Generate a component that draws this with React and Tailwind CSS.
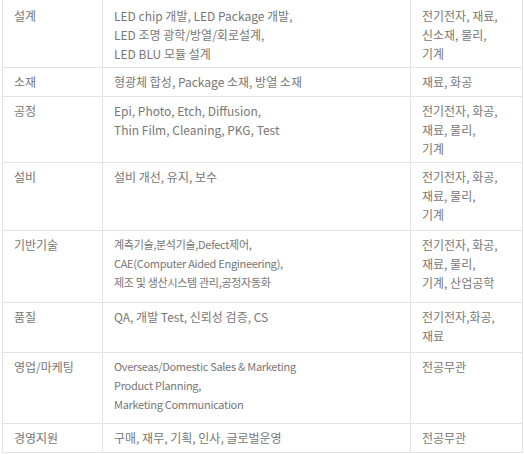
import React from "react";

const rows = [
  {
    h: "h-[68px]",
    pt: "pt-[6px]",
    a: "설계",
    b: ["LED chip 개발, LED Package 개발,", "LED 조명 광학/방열/회로설계,", "LED BLU 모듈 설계"],
    c: ["전기전자, 재료,", "신소재, 물리,", "기계"],
  },
  { h: "h-[29px]", pt: "pt-[4px]", a: "소재", b: ["형광체 합성, Package 소재, 방열 소재"], c: ["재료, 화공"] },
  {
    h: "h-[66px]",
    pt: "pt-[4px]",
    a: "공정",
    b: ["Epi, Photo, Etch, Diffusion,", "Thin Film, Cleaning, PKG, Test"],
    c: ["전기전자, 화공,", "재료, 물리,", "기계"],
  },
  { h: "h-[68px]", pt: "pt-[4px]", a: "설비", b: ["설비 개선, 유지, 보수"], c: ["전기전자, 화공,", "재료, 물리,", "기계"] },
  {
    h: "h-[72px]",
    pt: "pt-[4px]",
    a: "기반기술",
    small: true,
    b: ["계측기술,분석기술,Defect제어,", "CAE(Computer Aided Engineering),", "제조 및 생산시스템 관리,공정자동화"],
    c: ["전기전자, 화공,", "재료, 물리,", "기계, 산업공학"],
  },
  { h: "h-[50px]", pt: "pt-[4px]", a: "품질", b: ["QA, 개발 Test, 신뢰성 검증, CS"], c: ["전기전자,화공,", "재료"] },
  {
    h: "h-[71px]",
    pt: "pt-[4px]",
    a: "영업/마케팅",
    small: true,
    b: ["Overseas/Domestic Sales & Marketing", "Product Planning,", "Marketing Communication"],
    c: ["전공무관"],
  },
  { h: "h-[29px]", pt: "pt-[4px]", a: "경영지원", b: ["구매, 재무, 기획, 인사, 글로벌운영"], c: ["전공무관"] },
];

const font = "font-['Noto_Sans_CJK_KR','Noto_Sans',sans-serif]";

export default function App() {
  return (
    <div className="w-[524px] h-[454px] bg-white overflow-hidden">
      <div className={`ml-[2px] w-[521px] border-l border-r border-[#e3e3e3] text-[#777777] text-[12px] leading-[19px] ${font}`}>
        {rows.map((r, i) => (
          <div key={i} className={`flex border-b border-[#e3e3e3] ${r.h}`}>
            <div className={`w-[100px] shrink-0 border-r border-[#e3e3e3] pl-[11px] ${r.pt}`}>{r.a}</div>
            <div
              className={`w-[308px] shrink-0 border-r border-[#e3e3e3] pl-[11px] ${r.pt} ${
                r.small ? "text-[11px] tracking-[-0.3px]" : ""
              }`}
            >
              {r.b.map((t, j) => (
                <div key={j} className="whitespace-nowrap">{t}</div>
              ))}
            </div>
            <div className={`w-[111px] shrink-0 pl-[11px] ${r.pt}`}>
              {r.c.map((t, j) => (
                <div key={j} className="whitespace-nowrap">{t}</div>
              ))}
            </div>
          </div>
        ))}
      </div>
    </div>
  );
}
